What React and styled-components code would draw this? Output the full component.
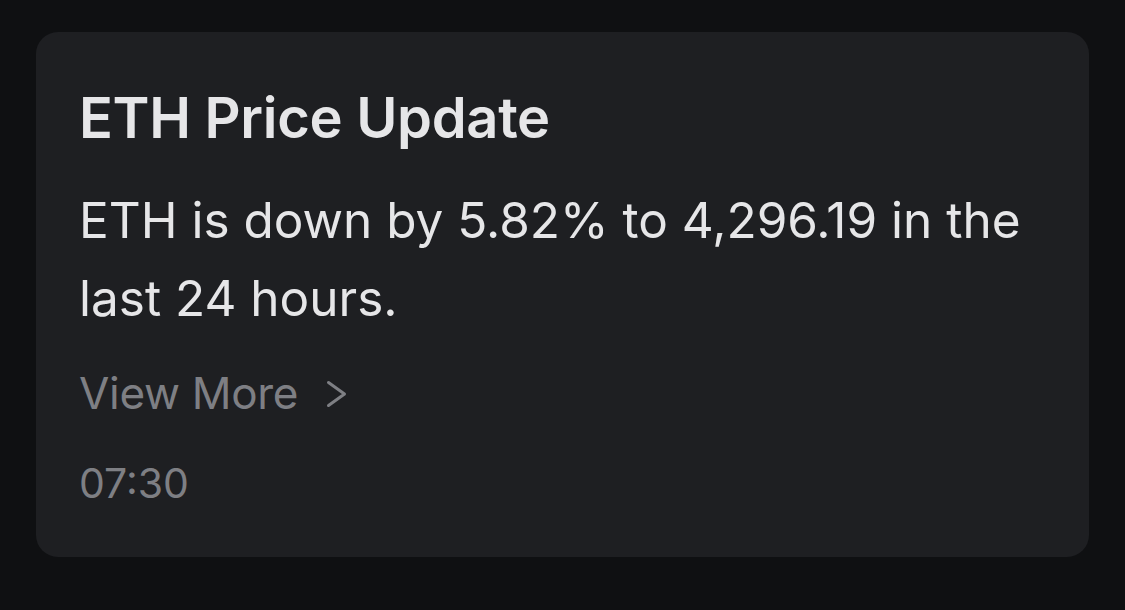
import React from "react";
import styled, { createGlobalStyle } from "styled-components";

const Global = createGlobalStyle`
  html, body { margin: 0; padding: 0; background: #0f1012; }
  body { font-family: Inter, "Noto Sans", sans-serif; }
`;

const Page = styled.div`
  box-sizing: border-box;
  width: 1125px;
  height: 610px;
  padding: 32px 36px 53px 36px;
  background: #0f1012;
`;

const Card = styled.div`
  box-sizing: border-box;
  height: 525px;
  background: #1e1f22;
  border-radius: 22px;
  padding: 54px 43px 0 43px;
  display: flex;
  flex-direction: column;
`;

const Title = styled.h1`
  margin: 0;
  font-size: 56px;
  line-height: 64px;
  font-weight: 600;
  letter-spacing: -0.3px;
  color: #e6e6e8;
`;

const Body = styled.p`
  margin: 31px 0 0 0;
  font-size: 49.5px;
  line-height: 78px;
  font-weight: 400;
  color: #e6e6e8;
`;

const Link = styled.a`
  margin-top: 28px;
  display: flex;
  align-items: center;
  gap: 28px;
  font-size: 44px;
  line-height: 56px;
  letter-spacing: -0.3px;
  color: #7e7f84;
  text-decoration: none;
`;

const Time = styled.div`
  margin-top: 37px;
  font-size: 41px;
  line-height: 50px;
  color: #7e7f84;
`;

const Chevron = () => (
  <svg width="22" height="28" viewBox="0 0 22 28" fill="none" style={{ marginTop: 2 }}>
    <path d="M2.5 2.5 L18.5 14 L2.5 25.5" stroke="#7e7f84" strokeWidth="3" strokeLinecap="round" strokeLinejoin="round" />
  </svg>
);

export default function App() {
  return (
    <Page>
      <Global />
      <Card>
        <Title>ETH Price Update</Title>
        <Body>ETH is down by 5.82% to 4,296.19 in the last 24 hours.</Body>
        <Link>
          View More
          <Chevron />
        </Link>
        <Time>07:30</Time>
      </Card>
    </Page>
  );
}
